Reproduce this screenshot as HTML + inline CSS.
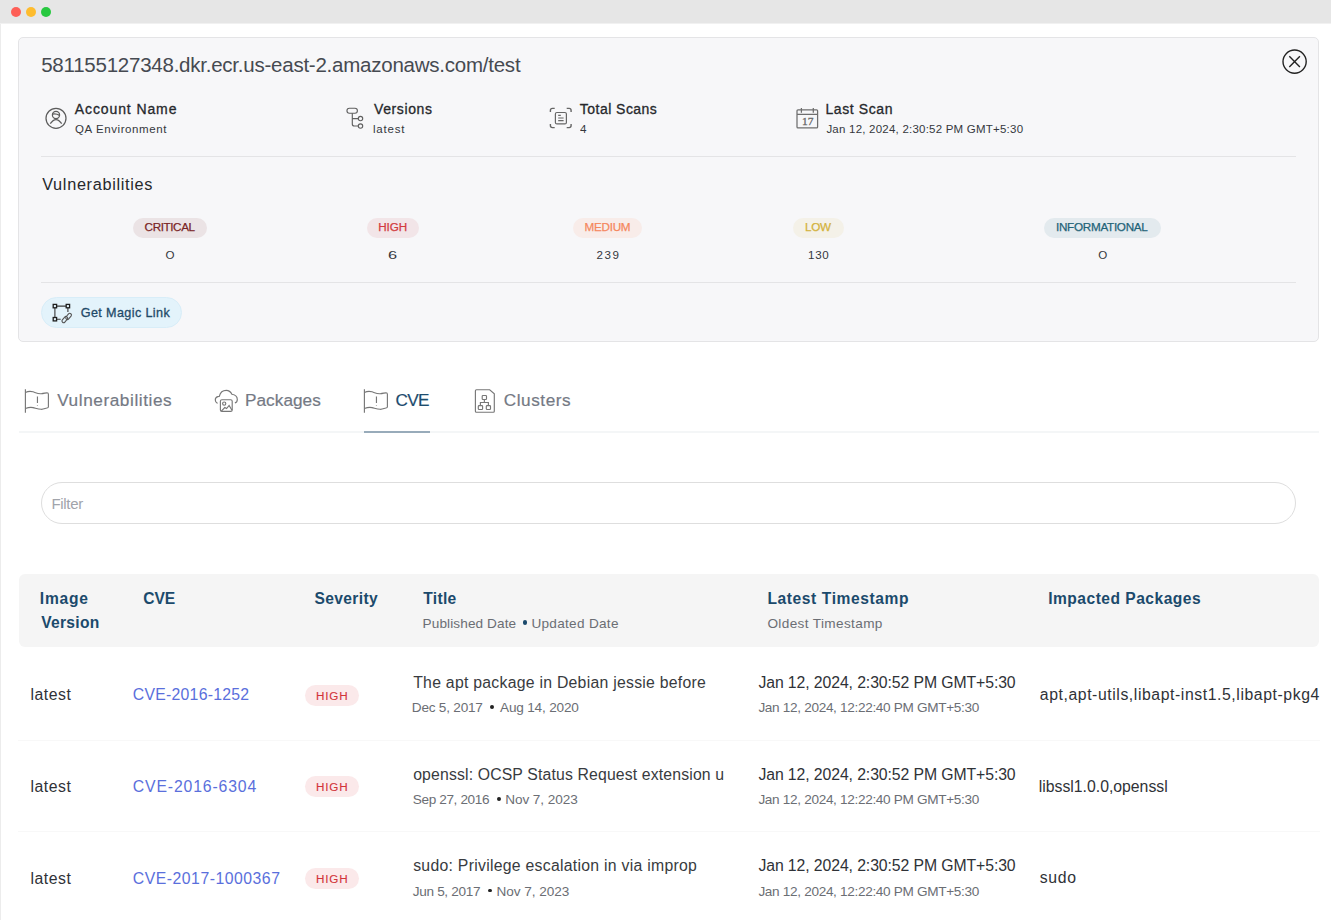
<!DOCTYPE html>
<html><head><meta charset="utf-8">
<style>
html,body{margin:0;padding:0;}
body{width:1331px;height:920px;position:relative;overflow:hidden;background:#fff;font-family:"Liberation Sans",sans-serif;}
.t{position:absolute;white-space:nowrap;line-height:1;}
.ic{position:absolute;}
.bd{position:absolute;border-radius:12px;}
.ln{position:absolute;}
</style></head><body>
<div class="ln" style="left:0;top:0;width:1331px;height:23px;background:#e6e6e6"></div>
<div class="ln" style="left:0;top:23px;width:1331px;height:1px;background:#f1f1f1"></div>
<div class="ln" style="left:0;top:24px;width:1px;height:896px;background:#ececec"></div>
<div style="position:absolute;left:10.5px;top:7px;width:10px;height:10px;border-radius:50%;background:#fe5f57"></div>
<div style="position:absolute;left:25.8px;top:7px;width:10px;height:10px;border-radius:50%;background:#febc2e"></div>
<div style="position:absolute;left:41px;top:7px;width:10px;height:10px;border-radius:50%;background:#28c840"></div>
<div style="position:absolute;left:18px;top:37px;width:1299px;height:303px;border:1px solid #e4e4e6;border-radius:5px;background:#f7f7f9"></div>
<div class="ln" style="left:41px;top:156px;width:1255px;height:1px;background:#e4e4e6"></div>
<div class="ln" style="left:41px;top:282px;width:1255px;height:1px;background:#e4e4e6"></div>
<div style="position:absolute;left:41px;top:297px;width:139px;height:29px;border:1px solid #d8edf8;border-radius:16px;background:#e3f3fb"></div>
<div class="ln" style="left:19px;top:431px;width:1300px;height:2px;background:#f4f6f7"></div>
<div class="ln" style="left:364px;top:431px;width:66px;height:2px;background:#98abba"></div>
<div style="position:absolute;left:41px;top:482px;width:1253px;height:40px;border:1px solid #dedede;border-radius:21px;background:#fff"></div>
<div style="position:absolute;left:19px;top:574px;width:1300px;height:73px;border-radius:6px;background:#f5f5f5"></div>
<div class="ln" style="left:18px;top:740px;width:1302px;height:1px;background:#f8f8f8"></div>
<div class="ln" style="left:18px;top:831px;width:1302px;height:1px;background:#f8f8f8"></div>
<div class="bd" style="left:133.2px;top:218.4px;width:74.3px;height:19.2px;background:#ebe3e5"></div><div class="bd" style="left:366.5px;top:218.4px;width:52.6px;height:19.2px;background:#f2e5e8"></div><div class="bd" style="left:572.8px;top:218.4px;width:69.1px;height:19.2px;background:#f8ece9"></div><div class="bd" style="left:793.3px;top:218.4px;width:50.3px;height:19.2px;background:#f4f1e8"></div><div class="bd" style="left:1044.1px;top:218.4px;width:116.6px;height:19.2px;background:#e3eaee"></div><div class="bd" style="left:304.8px;top:684.7px;width:54.1px;height:20.9px;background:#fbe9ea"></div><div class="bd" style="left:304.8px;top:776.4px;width:54.1px;height:20.9px;background:#fbe9ea"></div><div class="bd" style="left:304.8px;top:868.1px;width:54.1px;height:20.9px;background:#fbe9ea"></div>
<svg class="ic" style="left:42px;top:104px" width="28" height="28" viewBox="0 0 28 28" fill="none" stroke="#5c5c5c" stroke-width="1.25"><circle cx="14" cy="14.3" r="10"/><circle cx="14" cy="11" r="3.6"/><path d="M10.6 10.2 Q14 9.3 17.5 11.4"/><path d="M8.3 19.7 Q14 11.6 19.7 19.7"/></svg><svg class="ic" style="left:342px;top:104px" width="24" height="26" viewBox="0 0 24 26" fill="none" stroke="#606060" stroke-width="1.15"><rect x="4.95" y="4.25" width="10.45" height="4.95" rx="2.47"/><path d="M10.3 9.2 V20 Q10.3 22 12.3 22 H16.3 M10.3 14.55 H16.3"/><circle cx="18.5" cy="14.55" r="2.2"/><circle cx="18.5" cy="22" r="2.2"/></svg><svg class="ic" style="left:546px;top:104px" width="30" height="28" viewBox="0 0 30 28" fill="none" stroke="#666" stroke-width="1.4"><path d="M4.4 8.1 V6.4 Q4.4 4.4 6.4 4.4 H8.7 M20.7 4.4 H23.1 Q25.1 4.4 25.1 6.4 V8.1 M4.4 20.1 V21.6 Q4.4 23.6 6.4 23.6 H8.7 M20.7 23.6 H23.1 Q25.1 23.6 25.1 21.6 V20.1"/><rect x="9.4" y="8.5" width="11" height="11.4" rx="1.5" stroke-width="1.2"/><path d="M12.2 11.4 H14.8 M12.2 14 H17.6 M12.2 16.6 H17.6" stroke-width="1.1"/></svg><svg class="ic" style="left:792px;top:104px" width="30" height="28" viewBox="0 0 30 28" fill="none" stroke="#6e6e6e" stroke-width="1.25"><rect x="5" y="5.8" width="20.6" height="18.1" rx="1"/><path d="M5 10.3 H25.6 M9.4 4 V8.8 M21.3 4 V8.8"/><text x="15.8" y="20.8" font-family="Liberation Serif" font-size="11" text-anchor="middle" fill="#6a6a6a" stroke="#6a6a6a" stroke-width="0.3" textLength="11.4" lengthAdjust="spacingAndGlyphs">17</text></svg><svg class="ic" style="left:1281px;top:48px" width="28" height="28" viewBox="0 0 28 28" fill="none" stroke="#222" stroke-width="1.4"><circle cx="13.6" cy="13.6" r="11.6"/><path d="M8.3 8.3 L18.9 18.9 M18.9 8.3 L8.3 18.9"/></svg><svg class="ic" style="left:48px;top:300px" width="28" height="26" viewBox="0 0 28 26" fill="none" stroke="#3a3a3a" stroke-width="1.1"><path d="M6.9 6.1 H19.9 M6.9 6.1 V19.2 M6.9 19.2 H12.7 M19.9 6.1 V12.1"/><rect x="5.2" y="4.4" width="3.4" height="3.4" fill="#e3f3fb" stroke="#1e1e1e" stroke-width="1.3"/><rect x="18.2" y="4.4" width="3.4" height="3.4" fill="#e3f3fb" stroke="#1e1e1e" stroke-width="1.3"/><rect x="5.2" y="17.5" width="3.4" height="3.4" fill="#e3f3fb" stroke="#1e1e1e" stroke-width="1.3"/><rect x="13.3" y="17.9" width="7" height="3.3" rx="1.65" transform="rotate(-50 16.8 19.55)" stroke="#555"/><rect x="17.1" y="14.75" width="7" height="3.3" rx="1.65" transform="rotate(-50 20.6 16.4)" stroke="#555"/></svg><svg class="ic" style="left:20px;top:386px" width="32" height="30" viewBox="0 0 32 30" fill="none" stroke="#777" stroke-width="1.15"><path d="M5.4 3.3 V26.7"/><path d="M5.4 6.4 C8 5.2 10.5 5 13 5.8 C16 6.8 18 7.9 21.2 7.7 C24 7.5 25.5 6.8 27 6.8 Q28.4 6.9 28.4 8.3 V20.8 Q28.4 22 27 22 C25.5 22 24 23.4 21.2 23.3 C18 23.2 16 22.3 13 21.6 C10.5 21 8 21.5 5.4 22.5"/><path d="M17.45 10.6 V17.1 M17.45 19 V19.6"/></svg><svg class="ic" style="left:210px;top:386px" width="32" height="30" viewBox="0 0 32 30" fill="none" stroke="#777" stroke-width="1.15"><path d="M7.5 17.4 C4.8 16.3 4.2 11.8 7.8 10.6 L9.4 10.2 C10.3 6.3 13 4.3 16.3 4.3 C19 4.3 20.7 5.8 21.9 8.2 C25.4 8.8 27.3 11.3 27.3 13.4 C27.3 15.4 26.3 16.5 24.9 16.9"/><rect x="10.4" y="13.7" width="11.8" height="11.7" rx="1.5"/><circle cx="14.2" cy="17.6" r="1.6"/><path d="M11.3 25.2 L14.8 21.5 L16.6 22.6 L19.1 19.4 L22 24.2"/></svg><svg class="ic" style="left:359.4px;top:386px" width="32" height="30" viewBox="0 0 32 30" fill="none" stroke="#777" stroke-width="1.15"><path d="M5.4 3.3 V26.7"/><path d="M5.4 6.4 C8 5.2 10.5 5 13 5.8 C16 6.8 18 7.9 21.2 7.7 C24 7.5 25.5 6.8 27 6.8 Q28.4 6.9 28.4 8.3 V20.8 Q28.4 22 27 22 C25.5 22 24 23.4 21.2 23.3 C18 23.2 16 22.3 13 21.6 C10.5 21 8 21.5 5.4 22.5"/><path d="M17.45 10.6 V17.1 M17.45 19 V19.6"/></svg><svg class="ic" style="left:470px;top:386px" width="30" height="30" viewBox="0 0 30 30" fill="none" stroke="#777" stroke-width="1.15"><path d="M6.4 3.75 H19.7 L24.3 7.8 V25.2 Q24.3 26.2 23.3 26.2 H6.4 Q5.4 26.2 5.4 25.2 V4.75 Q5.4 3.75 6.4 3.75 Z"/><rect x="12.2" y="9.5" width="4.3" height="4" rx="0.8"/><rect x="8.3" y="19.6" width="4.3" height="3.9" rx="0.8"/><rect x="16.3" y="19.6" width="4.2" height="3.9" rx="0.8"/><path d="M14.35 13.5 V16.5 M10.4 19.6 V16.5 H18.4 V19.6"/></svg>
<div style="position:absolute;left:523.00px;top:620.20px;width:4.4px;height:4.4px;border-radius:50%;background:#1b4a6c"></div><div style="position:absolute;left:490.35px;top:705.15px;width:3.9px;height:3.9px;border-radius:50%;background:#222"></div><div style="position:absolute;left:496.85px;top:796.85px;width:3.9px;height:3.9px;border-radius:50%;background:#222"></div><div style="position:absolute;left:487.75px;top:888.55px;width:3.9px;height:3.9px;border-radius:50%;background:#222"></div>
<div class="t" id="title" style="left:41.20px;top:55.15px;font-size:20.5px;letter-spacing:-0.237px;color:#464a51;">581155127348.dkr.ecr.us-east-2.amazonaws.com/test</div>
<div class="t" id="l1" style="left:74.80px;top:101.85px;font-size:14px;letter-spacing:0.891px;color:#26282c;-webkit-text-stroke:0.3px #26282c;">Account Name</div>
<div class="t" id="v1" style="left:75.00px;top:123.97px;font-size:11.5px;letter-spacing:0.585px;color:#35383d;">QA Environment</div>
<div class="t" id="l2" style="left:374.00px;top:101.85px;font-size:14px;letter-spacing:0.614px;color:#26282c;-webkit-text-stroke:0.3px #26282c;">Versions</div>
<div class="t" id="v2" style="left:373.00px;top:123.87px;font-size:11.5px;letter-spacing:0.800px;color:#35383d;">latest</div>
<div class="t" id="l3" style="left:579.80px;top:101.85px;font-size:14px;letter-spacing:0.470px;color:#26282c;-webkit-text-stroke:0.3px #26282c;">Total Scans</div>
<div class="t" id="v3" style="left:579.80px;top:123.87px;font-size:11.5px;letter-spacing:0.000px;color:#35383d;transform:scaleX(1.014);transform-origin:0 0;">4</div>
<div class="t" id="l4" style="left:825.40px;top:101.85px;font-size:14px;letter-spacing:0.613px;color:#26282c;-webkit-text-stroke:0.3px #26282c;">Last Scan</div>
<div class="t" id="v4" style="left:826.40px;top:123.87px;font-size:11.5px;letter-spacing:0.222px;color:#35383d;">Jan 12, 2024, 2:30:52 PM GMT+5:30</div>
<div class="t" id="vh" style="left:42.20px;top:176.40px;font-size:16.3px;letter-spacing:0.679px;color:#26282c;">Vulnerabilities</div>
<div class="t" id="bc" style="left:144.60px;top:221.40px;font-size:11.7px;letter-spacing:-0.400px;color:#7a2526;-webkit-text-stroke:0.25px #7a2526;">CRITICAL</div>
<div class="t" id="bh" style="left:378.20px;top:221.40px;font-size:11.7px;letter-spacing:-0.067px;color:#d33b3f;-webkit-text-stroke:0.25px #d33b3f;">HIGH</div>
<div class="t" id="bm" style="left:584.40px;top:221.40px;font-size:11.7px;letter-spacing:-0.240px;color:#f5875d;-webkit-text-stroke:0.25px #f5875d;">MEDIUM</div>
<div class="t" id="bl" style="left:805.00px;top:221.40px;font-size:11.7px;letter-spacing:-0.300px;color:#d3b23b;-webkit-text-stroke:0.25px #d3b23b;">LOW</div>
<div class="t" id="bi" style="left:1056.00px;top:221.40px;font-size:11.7px;letter-spacing:-0.283px;color:#1f6378;-webkit-text-stroke:0.25px #1f6378;">INFORMATIONAL</div>
<div class="t" id="n1" style="left:165.60px;top:248.88px;font-size:11.6px;letter-spacing:0.000px;color:#35383d;">O</div>
<div class="t" id="n2" style="left:388.00px;top:248.88px;font-size:11.6px;letter-spacing:0.000px;color:#35383d;transform:scaleX(1.410);transform-origin:0 0;">6</div>
<div class="t" id="n3" style="left:596.60px;top:248.88px;font-size:11.6px;letter-spacing:1.500px;color:#35383d;">239</div>
<div class="t" id="n4" style="left:808.00px;top:248.88px;font-size:11.6px;letter-spacing:0.700px;color:#35383d;">130</div>
<div class="t" id="n5" style="left:1098.20px;top:248.88px;font-size:11.6px;letter-spacing:0.000px;color:#35383d;">O</div>
<div class="t" id="gml" style="left:80.80px;top:307.33px;font-size:12.6px;letter-spacing:0.377px;color:#1f4a68;-webkit-text-stroke:0.3px #1f4a68;">Get Magic Link</div>
<div class="t" id="tab1" style="left:57.20px;top:391.84px;font-size:17.2px;letter-spacing:0.579px;color:#747984;-webkit-text-stroke:0.2px #747984;">Vulnerabilities</div>
<div class="t" id="tab2" style="left:245.00px;top:391.84px;font-size:17.2px;letter-spacing:0.043px;color:#747984;-webkit-text-stroke:0.2px #747984;">Packages</div>
<div class="t" id="tab3" style="left:395.60px;top:391.84px;font-size:17.2px;letter-spacing:-0.700px;color:#1d4c6e;-webkit-text-stroke:0.2px #1d4c6e;">CVE</div>
<div class="t" id="tab4" style="left:503.80px;top:391.84px;font-size:17.2px;letter-spacing:0.543px;color:#747984;-webkit-text-stroke:0.2px #747984;">Clusters</div>
<div class="t" id="filter" style="left:51.40px;top:496.30px;font-size:15px;letter-spacing:-0.300px;color:#a1a4ab;">Filter</div>
<div class="t" id="h1" style="left:39.80px;top:590.99px;font-size:15.6px;letter-spacing:0.750px;color:#1b4a6c;font-weight:700;">Image</div>
<div class="t" id="h1b" style="left:41.20px;top:614.59px;font-size:15.6px;letter-spacing:0.283px;color:#1b4a6c;font-weight:700;">Version</div>
<div class="t" id="h2" style="left:143.20px;top:590.99px;font-size:15.6px;letter-spacing:0.000px;color:#1b4a6c;font-weight:700;">CVE</div>
<div class="t" id="h3" style="left:314.40px;top:590.99px;font-size:15.6px;letter-spacing:0.386px;color:#1b4a6c;font-weight:700;">Severity</div>
<div class="t" id="h4" style="left:423.20px;top:590.99px;font-size:15.6px;letter-spacing:0.325px;color:#1b4a6c;font-weight:700;">Title</div>
<div class="t" id="h4b1" style="left:422.60px;top:617.29px;font-size:13.6px;letter-spacing:0.100px;color:#6b6e74;">Published Date</div>
<div class="t" id="h4b2" style="left:531.40px;top:617.29px;font-size:13.6px;letter-spacing:0.291px;color:#6b6e74;">Updated Date</div>
<div class="t" id="h5" style="left:767.40px;top:590.99px;font-size:15.6px;letter-spacing:0.593px;color:#1b4a6c;font-weight:700;">Latest Timestamp</div>
<div class="t" id="h5b" style="left:767.40px;top:617.29px;font-size:13.6px;letter-spacing:0.367px;color:#6b6e74;">Oldest Timestamp</div>
<div class="t" id="h6" style="left:1048.20px;top:590.99px;font-size:15.6px;letter-spacing:0.481px;color:#1b4a6c;font-weight:700;">Impacted Packages</div>
<div class="t" id="r0v" style="left:30.40px;top:686.83px;font-size:15.8px;letter-spacing:0.540px;color:#2f3237;">latest</div>
<div class="t" id="r0c" style="left:132.80px;top:686.83px;font-size:15.8px;letter-spacing:0.250px;color:#5a6fdc;">CVE-2016-1252</div>
<div class="t" id="r0b" style="left:316.00px;top:689.60px;font-size:11.7px;letter-spacing:0.833px;color:#d23439;-webkit-text-stroke:0.1px #d23439;">HIGH</div>
<div class="t" id="r0t" style="left:413.20px;top:674.53px;font-size:15.8px;letter-spacing:0.261px;color:#383b40;">The apt package in Debian jessie before</div>
<div class="t" id="r0d1" style="left:411.80px;top:700.89px;font-size:13.6px;letter-spacing:-0.220px;color:#6b6e74;">Dec 5, 2017</div>
<div class="t" id="r0d2" style="left:500.00px;top:700.89px;font-size:13.6px;letter-spacing:-0.182px;color:#6b6e74;">Aug 14, 2020</div>
<div class="t" id="r0s1" style="left:758.40px;top:674.53px;font-size:15.8px;letter-spacing:-0.097px;color:#2f3237;">Jan 12, 2024, 2:30:52 PM GMT+5:30</div>
<div class="t" id="r0s2" style="left:758.40px;top:700.99px;font-size:13.6px;letter-spacing:-0.324px;color:#6b6e74;">Jan 12, 2024, 12:22:40 PM GMT+5:30</div>
<div class="t" id="r0p" style="left:1039.80px;top:687.43px;font-size:15.8px;letter-spacing:0.569px;color:#2f3237;">apt,apt-utils,libapt-inst1.5,libapt-pkg4</div>
<div class="t" id="r1v" style="left:30.40px;top:778.53px;font-size:15.8px;letter-spacing:0.540px;color:#2f3237;">latest</div>
<div class="t" id="r1c" style="left:132.80px;top:778.53px;font-size:15.8px;letter-spacing:0.842px;color:#5a6fdc;">CVE-2016-6304</div>
<div class="t" id="r1b" style="left:316.00px;top:781.30px;font-size:11.7px;letter-spacing:0.833px;color:#d23439;-webkit-text-stroke:0.1px #d23439;">HIGH</div>
<div class="t" id="r1t" style="left:413.20px;top:767.23px;font-size:15.8px;letter-spacing:0.144px;color:#383b40;">openssl: OCSP Status Request extension u</div>
<div class="t" id="r1d1" style="left:412.80px;top:792.59px;font-size:13.6px;letter-spacing:-0.382px;color:#6b6e74;">Sep 27, 2016</div>
<div class="t" id="r1d2" style="left:505.20px;top:792.59px;font-size:13.6px;letter-spacing:-0.080px;color:#6b6e74;">Nov 7, 2023</div>
<div class="t" id="r1s1" style="left:758.40px;top:767.23px;font-size:15.8px;letter-spacing:-0.097px;color:#2f3237;">Jan 12, 2024, 2:30:52 PM GMT+5:30</div>
<div class="t" id="r1s2" style="left:758.40px;top:792.69px;font-size:13.6px;letter-spacing:-0.324px;color:#6b6e74;">Jan 12, 2024, 12:22:40 PM GMT+5:30</div>
<div class="t" id="r1p" style="left:1038.80px;top:779.13px;font-size:15.8px;letter-spacing:-0.011px;color:#2f3237;">libssl1.0.0,openssl</div>
<div class="t" id="r2v" style="left:30.40px;top:871.23px;font-size:15.8px;letter-spacing:0.540px;color:#2f3237;">latest</div>
<div class="t" id="r2c" style="left:132.80px;top:871.23px;font-size:15.8px;letter-spacing:0.500px;color:#5a6fdc;">CVE-2017-1000367</div>
<div class="t" id="r2b" style="left:316.00px;top:873.00px;font-size:11.7px;letter-spacing:0.833px;color:#d23439;-webkit-text-stroke:0.1px #d23439;">HIGH</div>
<div class="t" id="r2t" style="left:413.20px;top:857.93px;font-size:15.8px;letter-spacing:0.272px;color:#383b40;">sudo: Privilege escalation in via improp</div>
<div class="t" id="r2d1" style="left:412.80px;top:885.29px;font-size:13.6px;letter-spacing:-0.340px;color:#6b6e74;">Jun 5, 2017</div>
<div class="t" id="r2d2" style="left:496.60px;top:885.29px;font-size:13.6px;letter-spacing:-0.070px;color:#6b6e74;">Nov 7, 2023</div>
<div class="t" id="r2s1" style="left:758.40px;top:857.93px;font-size:15.8px;letter-spacing:-0.097px;color:#2f3237;">Jan 12, 2024, 2:30:52 PM GMT+5:30</div>
<div class="t" id="r2s2" style="left:758.40px;top:885.39px;font-size:13.6px;letter-spacing:-0.324px;color:#6b6e74;">Jan 12, 2024, 12:22:40 PM GMT+5:30</div>
<div class="t" id="r2p" style="left:1039.80px;top:869.83px;font-size:15.8px;letter-spacing:0.633px;color:#2f3237;">sudo</div>
</body></html>
